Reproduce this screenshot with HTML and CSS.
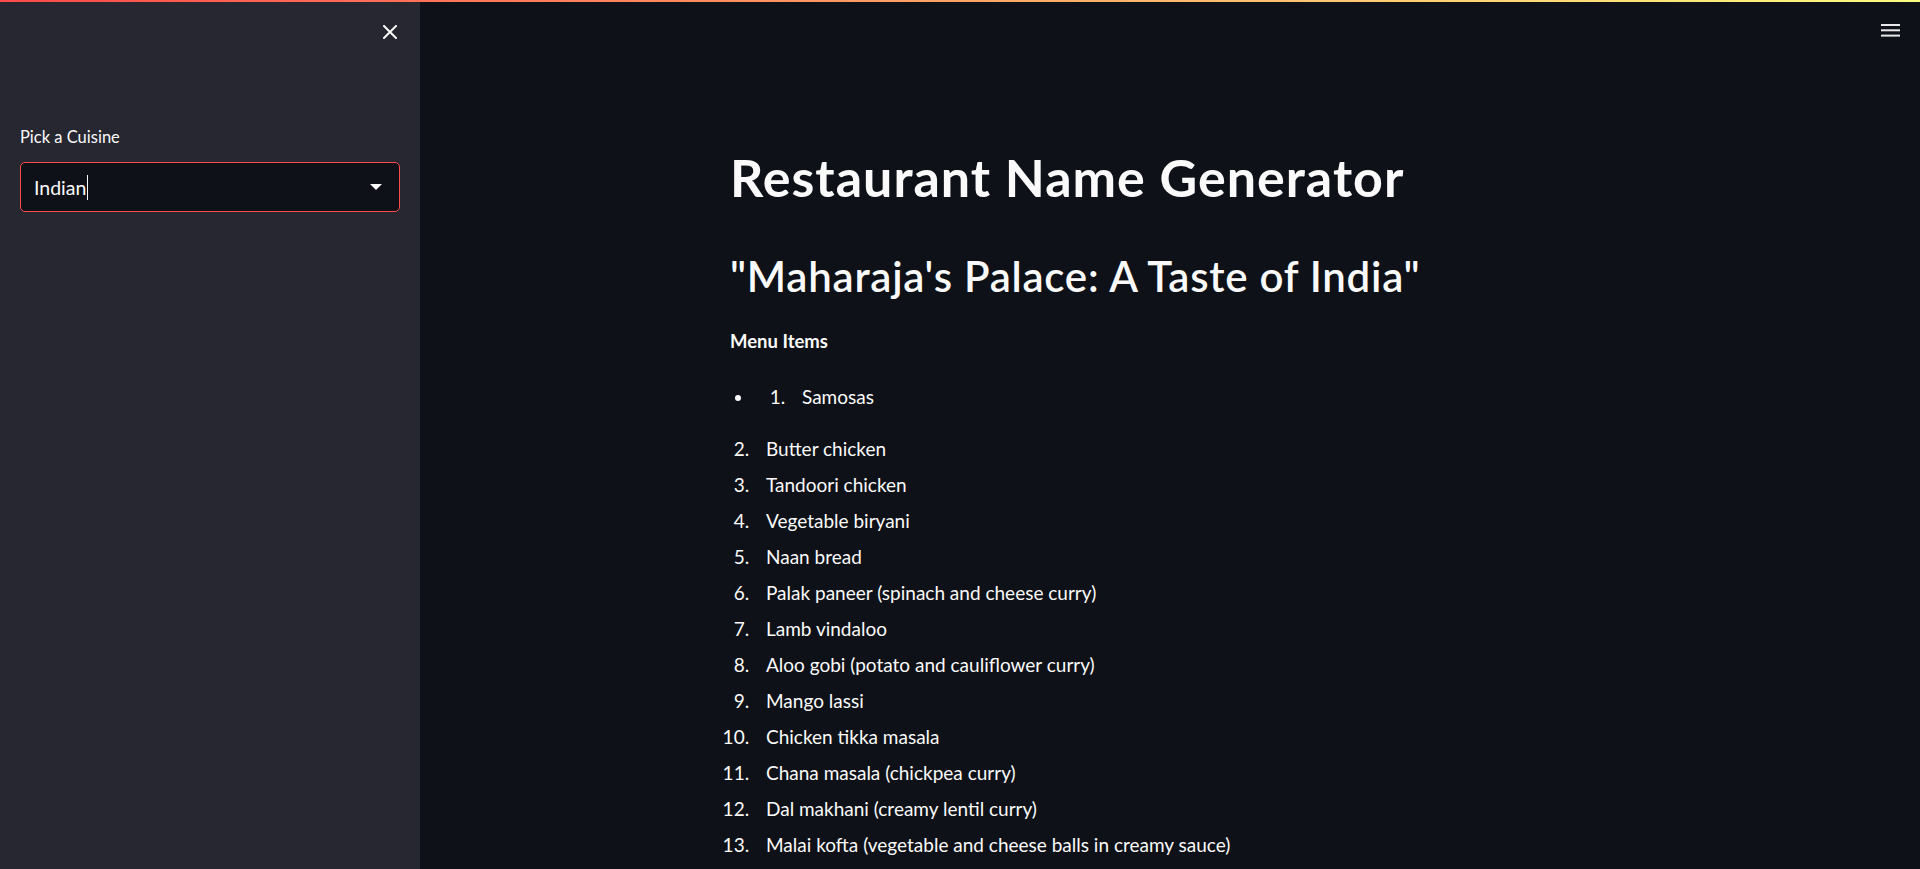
FILE: index.html
```html
<!DOCTYPE html>
<html lang="en">
<head>
<meta charset="utf-8">
<title>Restaurant Name Generator</title>
<link rel="stylesheet" href="styles.css">
</head>
<body>
<div class="decoration"></div>
<div class="app">
  <aside class="sidebar">
    <div class="sidebar-header">
      <button class="icon-btn close-btn" aria-label="Close sidebar">
        <svg width="14" height="14" viewBox="0 0 14 14"><path d="M1 1 L13 13 M13 1 L1 13" stroke="#fafafa" stroke-width="2" stroke-linecap="square"/></svg>
      </button>
    </div>
    <div class="sidebar-content">
      <label class="field-label">Pick a Cuisine</label>
      <div class="select">
        <span class="select-value">Indian</span><span class="caret"></span>
        <svg class="select-arrow" width="12" height="6" viewBox="0 0 12 6"><polygon points="0,0 12,0 6,6" fill="#fafafa"/></svg>
      </div>
    </div>
  </aside>
  <main class="main">
    <header class="main-header">
      <button class="icon-btn menu-btn" aria-label="Main menu">
        <svg width="19" height="13" viewBox="0 0 19 13"><rect x="0" y="0" width="19" height="2" fill="#e8e8ea"/><rect x="0" y="5.3" width="19" height="2" fill="#e8e8ea"/><rect x="0" y="10.6" width="19" height="2" fill="#e8e8ea"/></svg>
      </button>
    </header>
    <div class="block">
      <h1 class="title">Restaurant Name Generator</h1>
      <h2 class="subtitle">"Maharaja's Palace: A Taste of India"</h2>
      <p class="section-label"><strong>Menu Items</strong></p>
      <ul class="list bullets">
        <li>
          <ol class="list">
            <li>Samosas</li>
          </ol>
        </li>
      </ul>
      <ol class="list" start="2">
        <li>Butter chicken</li>
        <li>Tandoori chicken</li>
        <li>Vegetable biryani</li>
        <li>Naan bread</li>
        <li>Palak paneer (spinach and cheese curry)</li>
        <li>Lamb vindaloo</li>
        <li>Aloo gobi (potato and cauliflower curry)</li>
        <li>Mango lassi</li>
        <li>Chicken tikka masala</li>
        <li>Chana masala (chickpea curry)</li>
        <li>Dal makhani (creamy lentil curry)</li>
        <li>Malai kofta (vegetable and cheese balls in creamy sauce)</li>
      </ol>
    </div>
  </main>
</div>
</body>
</html>
```

FILE: styles.css
```css
html, body {
  margin: 0;
  padding: 0;
  height: 100%;
}

body {
  background: #0e1117;
  color: #fafafa;
  font-family: Lato, "Noto Sans", sans-serif;
  overflow: hidden;
}

.decoration {
  position: fixed;
  top: 0;
  left: 0;
  right: 0;
  height: 2px;
  background: linear-gradient(90deg, #ff4b4b, #fffd80);
  z-index: 10;
}

.app {
  display: flex;
  height: 869px;
}

.sidebar {
  width: 420px;
  flex: 0 0 420px;
  background: #262730;
  display: flex;
  flex-direction: column;
}

.sidebar-header {
  display: flex;
  justify-content: flex-end;
  padding: 18px 16px 0 0;
}

.icon-btn {
  background: none;
  border: none;
  padding: 0;
  margin: 0;
  display: flex;
  align-items: center;
  justify-content: center;
  cursor: pointer;
}

.close-btn {
  width: 28px;
  height: 28px;
}

.sidebar-content {
  padding: 80px 20px 0 20px;
  display: flex;
  flex-direction: column;
}

.field-label {
  font-size: 16.5px;
  line-height: 22px;
  color: #fafafa;
  margin-bottom: 14px;
}

.select {
  height: 50px;
  box-sizing: border-box;
  border: 1px solid #ff4b4b;
  border-radius: 5px;
  background: #0e1117;
  display: flex;
  align-items: center;
  padding: 0 17px 0 13px;
}

.select-value {
  font-size: 19.5px;
  color: #fafafa;
}

.caret {
  width: 1px;
  height: 25px;
  background: #fafafa;
  margin-left: 1px;
}

.select-arrow {
  margin-left: auto;
}

.main {
  flex: 1;
  display: flex;
  flex-direction: column;
}

.main-header {
  display: flex;
  justify-content: flex-end;
  padding: 24px 20px 0 0;
}

.menu-btn {
  width: 19px;
  height: 13px;
}

.block {
  width: 880px;
  margin: 110px auto 0;
}

.title {
  font-size: 52px;
  font-weight: 700;
  letter-spacing: 1px;
  line-height: 60px;
  margin: 0;
}

.subtitle {
  font-size: 42px;
  font-weight: 600;
  letter-spacing: 0.75px;
  line-height: 49px;
  margin: 45px 0 0;
}

.section-label {
  font-size: 18.5px;
  line-height: 32px;
  margin: 24px 0 0;
}

.section-label strong {
  font-weight: 700;
}

.list {
  margin: 0;
  padding: 0;
  font-size: 19px;
  line-height: 32px;
}

.list li {
  margin: 4px 0 4px 24px;
  padding-left: 12px;
}

.bullets {
  margin: 24px 0 20px;
  list-style: disc;
}
```
